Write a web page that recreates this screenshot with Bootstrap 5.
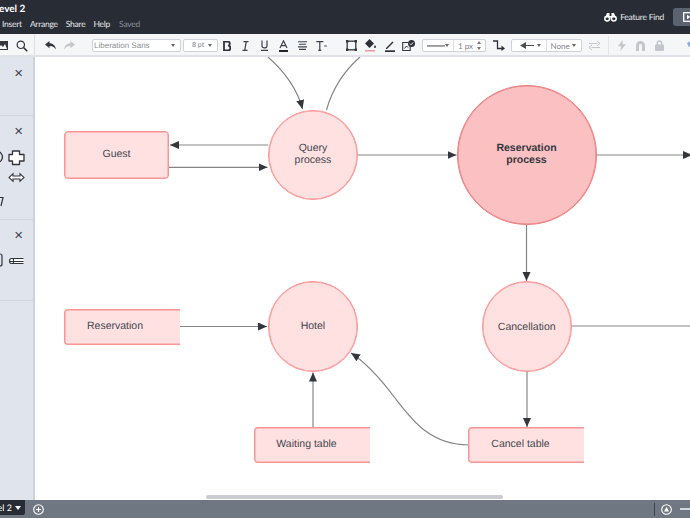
<!DOCTYPE html>
<html lang="en">
<head>
  <meta charset="UTF-8">
  <title>Level 2</title>
  <link href="https://cdn.jsdelivr.net/npm/bootstrap@5.3.0/dist/css/bootstrap.min.css" rel="stylesheet">
  <script src="https://cdn.jsdelivr.net/npm/bootstrap@5.3.0/dist/js/bootstrap.bundle.min.js"></script>
  <style>
    html, body { height: 518px; overflow: hidden; background: #fff; }
    body { font-family: "Lato", "Liberation Sans", sans-serif; color: #3a414a; text-rendering: geometricPrecision; }

    /* top bar */
    .app-top { height: 34px; background: #282c35; color: #fff; }
    .doc-name { font-size: 10px; font-weight: 700; line-height: 12px; margin-left: -6px; padding-top: 3px; }
    .menu-row { font-size: 8.5px; line-height: 12px; letter-spacing: -.25px; gap: 8px; margin-left: 2px; margin-top: 3px; color: #e6e8ec; }
    .menu-saved { color: #8b9099; margin-left: 1px; }
    .find-btn { font-size: 8.5px; letter-spacing: -.25px; color: #e6e8ec; gap: 3px; margin-right: 9px; flex: none; }
    .present-btn { width: 30px; height: 18px; flex: none; margin-right: -13px; background: #5c6370; border-radius: 3px; padding: 4px 0 0 10px; }

    /* tool bar */
    .tool-row { height: 23px; padding-top: 2px; background: #f5f6f8; border-bottom: 2px solid #e0e2e8; }
    .tb-ic { width: 19px; height: 19px; flex: none; }
    .tb-first { width: 42px; height: 21px; padding-top: 2px; margin-top: -2px; margin-left: -7px; align-self: flex-start; flex: none; border-right: 1px solid #dcdfe5; }
    .tb-undo { margin-left: 6px; }
    .tb-sel { height: 13px; background: #fff; border: 1px solid #cfd2d8; border-radius: 2px; font-size: 8px; color: #7d828a; flex: none; }
    .sel-font { width: 89px; margin-left: 13px; padding-left: 1px; font-family: "Liberation Sans", sans-serif; color: #8a8f96; }
    .sel-size { width: 35px; margin-left: 2px; margin-right: -1px; font-size: 7px; padding-left: 8px; }
    .sel-line { width: 64px; margin-left: 4px; }
    .sel-arrow { width: 71px; margin-left: 3px; }
    .sel-part { border-right: 1px solid #dcdfe5; }
    .caret-dn { width: 0; height: 0; border-left: 2.5px solid transparent; border-right: 2.5px solid transparent; border-top: 3px solid #666; margin-left: auto; margin-right: 5px; }
    .tb-gapl { margin-left: 3px; }
    .tb-gapm { margin-left: 11px; }
    .tb-rule { width: 1px; height: 19px; background: #e3e5ea; margin-left: 4px; margin-right: 3px; flex: none; }
    .tb-wrench { margin-left: 14px; }

    /* side panel */
    .work-row { height: 443px; }
    .side-panel { width: 35px; background: #e0e4ed; border-right: 2px solid #cfd2d8; overflow: hidden; flex: none; }
    .side-group { border-bottom: 1px solid #d2d6df; position: relative; }
    .grp-a { height: 59px; }
    .grp-b { height: 104px; }
    .grp-c { height: 81px; }
    .side-x { font-size: 15px; line-height: 15px; color: #3d434c; text-align: right; padding-right: 10px; font-family: "Liberation Sans", sans-serif; }
    .grp-a .side-x { padding-top: 9px; }
    .grp-b .side-x { padding-top: 8px; }
    .grp-c .side-x { padding-top: 8px; }
    .side-shapes { position: absolute; left: 0; top: 0; }

    /* canvas */
    .draw-area { position: relative; flex: 1 1 auto; background: #fff; overflow: hidden; }
    .wires { position: absolute; left: 0; top: 0; }
    .fc-node { position: absolute; display: flex; align-items: center; justify-content: center; text-align: center; font-family: "Liberation Sans", sans-serif; font-size: 10.5px; line-height: 12.5px; color: #43484f; background: #ffe1e1; border: 1px solid #fb9494; box-shadow: inset 0 0 0 .5px #fb9494; }
    .fc-round { border-radius: 50%; width: 90.5px; height: 90.5px; }
    .fc-box { border-radius: 4px; padding-bottom: 1px; }
    .fc-store { border-right: 0; border-radius: 4px 0 0 4px; height: 36px; width: 117px; padding-right: 13px; clip-path: inset(0 1px 0 0); }
    .n-guest { left: 29px; top: 74px; width: 105px; height: 48px; }
    .n-query { left: 232.700px; top: 52.500px; padding-bottom: 1px; }
    .n-res { left: 421.500px; top: 28px; width: 140px; height: 140px; padding-bottom: 2px; background: #fbc0c2; border-color: #ee7d7f; box-shadow: inset 0 0 0 .5px #ee7d7f; font-weight: 700; color: #33373d; }
    .n-hotel { left: 232.700px; top: 224px; }
    .n-cancel { left: 446.500px; top: 224px; padding-top: 1px; }
    .n-reserv { left: 29px; top: 252px; padding-right: 16px; }
    .n-wait { left: 219px; top: 370px; }
    .n-ctable { left: 433px; top: 370px; }
    .h-scroll { position: absolute; left: 171px; bottom: 1px; width: 297px; height: 4px; background: #c9ccd1; border-radius: 2px; }

    /* bottom bar */
    .app-bottom { height: 18px; background: #6f7782; }
    .page-tab { width: 25px; height: 15px; background: #282c35; color: #fff; font-size: 9px; line-height: 15px; overflow: hidden; white-space: nowrap; gap: 3px; padding-right: 4px; border-bottom-right-radius: 2px; flex: none; }
    .tab-caret { width: 0; height: 0; flex: none; border-left: 3px solid transparent; border-right: 3px solid transparent; border-top: 4px solid #fff; }
    .add-page { margin-left: 8px; }
    .zoom-rule { width: 1px; height: 13px; background: #3f454e; margin-right: 6px; }
    .zoom-dash { width: 10px; height: 2px; background: #d4d7dc; margin-left: 8px; }
  </style>
</head>
<body>

<div class="app-top d-flex justify-content-between overflow-hidden">
  <div>
    <div class="doc-name">Level 2</div>
    <div class="menu-row d-flex">
      <span>Insert</span><span>Arrange</span><span>Share</span><span>Help</span><span class="menu-saved">Saved</span>
    </div>
  </div>
  <div class="d-flex align-items-center flex-shrink-0">
    <div class="find-btn d-flex align-items-center">
      <svg width="13" height="10" viewBox="0 0 13 10"><circle cx="3.200" cy="6.600" r="2.400" fill="none" stroke="#fff" stroke-width="1.500"/><circle cx="9.800" cy="6.600" r="2.400" fill="none" stroke="#fff" stroke-width="1.500"/><path d="M1.200 5.500 3 1h2.500v3h2V1H10l1.800 4.500z" fill="#fff"/></svg>
      <span>Feature Find</span>
    </div>
    <div class="present-btn"><svg class="d-block" width="11" height="10" viewBox="0 0 11 10"><rect x=".7" y=".7" width="9.600" height="8.600" fill="none" stroke="#fff" stroke-width="1.300"/><path d="M4 2.800v4.400L7.500 5z" fill="#fff"/></svg></div>
  </div>
</div>

<div class="tool-row d-flex align-items-center overflow-hidden">
  <div class="tb-first d-flex">
    <div class="tb-ic d-flex align-items-center justify-content-center"><svg width="11" height="9" viewBox="0 0 11 9"><rect width="11" height="9" fill="#33373d"/><path d="M1 8 4 4l2 2 2-3 2 5z" fill="#f5f6f8"/></svg></div>
    <div class="tb-ic d-flex align-items-center justify-content-center"><svg width="12" height="12" viewBox="0 0 12 12"><circle cx="4.800" cy="4.800" r="3.700" fill="none" stroke="#33373d" stroke-width="1.200"/><path d="M7.600 7.600 11.300 11.300" stroke="#33373d" stroke-width="1.500"/></svg></div>
  </div>
  <div class="tb-ic tb-undo d-flex align-items-center justify-content-center"><svg width="11" height="9" viewBox="0 0 11 9"><path d="M0 3.500 4.500 0v2.200C8 2.200 10.500 4.500 11 8.500 9.500 6 7.500 5 4.500 5v2.200z" fill="#33373d"/></svg></div>
  <div class="tb-ic d-flex align-items-center justify-content-center"><svg width="11" height="9" viewBox="0 0 11 9"><path d="M11 3.500 6.500 0v2.200C3 2.200.5 4.500 0 8.500 1.500 6 3.500 5 6.500 5v2.200z" fill="#c4c7cc"/></svg></div>

  <div class="tb-sel sel-font d-flex align-items-center">Liberation Sans<span class="caret-dn"></span></div>
  <div class="tb-sel sel-size d-flex align-items-center">8 pt<span class="caret-dn"></span></div>

  <div class="tb-ic d-flex align-items-center justify-content-center"><svg width="8" height="10" viewBox="0 0 8 10"><path d="M1 .5h3.500c3 0 3 3.700.7 4.200 3 .4 2.800 4.800-.5 4.800H1z" fill="none" stroke="#2e3238" stroke-width="1.800"/></svg></div>
  <div class="tb-ic d-flex align-items-center justify-content-center"><svg width="7" height="10" viewBox="0 0 7 10"><path d="M1.500.7h5M.5 9.300h5M4.300.7 2.700 9.300" fill="none" stroke="#3d4249" stroke-width="1.200"/></svg></div>
  <div class="tb-ic d-flex align-items-center justify-content-center"><svg width="7" height="11" viewBox="0 0 7 11"><path d="M1 .5V6c0 2.500 5 2.500 5 0V.5M0 10.300h7" fill="none" stroke="#3d4249" stroke-width="1.200"/></svg></div>
  <div class="tb-ic d-flex align-items-center justify-content-center"><svg width="9" height="12" viewBox="0 0 9 12"><path d="M1 8 4.500.8 8 8M2.300 5.700h4.400" fill="none" stroke="#3d4249" stroke-width="1.200"/><rect y="10" width="9" height="2" fill="#23262b"/></svg></div>
  <div class="tb-ic d-flex align-items-center justify-content-center"><svg width="9" height="9" viewBox="0 0 9 9"><path d="M0 .7h9M1 3.300h7M0 5.900h9M1 8.400h7" stroke="#3d4249" stroke-width="1.100"/></svg></div>
  <div class="tb-ic d-flex align-items-center justify-content-center"><svg width="11" height="10" viewBox="0 0 11 10"><path d="M.3.700h7M3.800.7v8.800M2.300 9.400h3M8.200 5h2.600" fill="none" stroke="#3d4249" stroke-width="1.200"/></svg></div>

  <div class="tb-ic d-flex align-items-center justify-content-center tb-gapm"><svg width="11" height="11" viewBox="0 0 11 11"><rect x="1.200" y="1.200" width="8.600" height="8.600" fill="none" stroke="#33373d" stroke-width="1.300"/><path d="M0 0h2.400v2.400H0zM8.600 0H11v2.400H8.600zM0 8.600h2.400V11H0zM8.600 8.600H11V11H8.600z" fill="#33373d"/></svg></div>
  <div class="tb-ic d-flex align-items-center justify-content-center"><svg width="11" height="13" viewBox="0 0 11 13"><path d="M4.500 0 9 4.500 4.500 9 0 4.500zM10 6c.7 1 1 1.500 1 2a1 1 0 0 1-2 0c0-.5.300-1 1-2z" fill="#2e3238"/><rect y="11" width="10" height="1.500" fill="#f29a9a"/></svg></div>
  <div class="tb-ic d-flex align-items-center justify-content-center"><svg width="10" height="12" viewBox="0 0 10 12"><path d="M1 8 7.500 1.500l1 1L2 9H1z" fill="#2e3238"/><rect y="10.300" width="10" height="1.700" fill="#2e3238"/></svg></div>
  <div class="tb-ic d-flex align-items-center justify-content-center"><svg width="13" height="11" viewBox="0 0 13 11"><path d="M6 2.500H.7v8h7.500V6" fill="none" stroke="#33373d" stroke-width="1.100"/><path d="M2.500 8.500 4.500 6l1.500 1.500" fill="none" stroke="#33373d"/><circle cx="9.500" cy="3.500" r="3.500" fill="#2e3238"/><path d="M7.800 3.500 9.100 4.800 11.200 2.300" fill="none" stroke="#fff" stroke-width=".9"/></svg></div>

  <div class="tb-sel sel-line d-flex align-items-center">
    <div class="sel-part d-flex align-items-center h-100 w-50"><svg class="ms-1 flex-shrink-0" width="18" height="2" viewBox="0 0 18 2"><rect y=".4" width="18" height="1.100" fill="#55595f"/></svg><span class="caret-dn"></span></div>
    <div class="d-flex align-items-center h-100 w-50 ps-1">1 px<svg class="ms-auto me-1" width="4" height="9" viewBox="0 0 4 9"><path d="M2 0 4 3H0zM2 9 0 6h4z" fill="#777"/></svg></div>
  </div>
  <div class="tb-ic d-flex align-items-center justify-content-center tb-gapl"><svg width="12" height="11" viewBox="0 0 12 11"><path d="M0 1h4.500v7.500H9" fill="none" stroke="#2e3238" stroke-width="1.300"/><path d="M8.500 5.500 12 8.500 8.500 11z" fill="#2e3238"/></svg></div>
  <div class="tb-sel sel-arrow d-flex align-items-center">
    <div class="sel-part d-flex align-items-center h-100 w-50"><svg class="ms-2 flex-shrink-0" width="14" height="7" viewBox="0 0 14 7"><path d="M0 3.500 6 0v3h8v1H6v3z" fill="#4a4e55"/></svg><span class="caret-dn"></span></div>
    <div class="d-flex align-items-center h-100 w-50 ps-1">None<span class="caret-dn"></span></div>
  </div>
  <div class="tb-ic d-flex align-items-center justify-content-center tb-gapl"><svg width="11" height="9" viewBox="0 0 11 9"><path d="M0 2.500h8.500M8 0l3 2.500L8 5M11 6.500H2.500M3 4 0 6.500 3 9" fill="none" stroke="#c3c6cb" stroke-width="1"/></svg></div>
  <div class="tb-rule"></div>
  <div class="tb-ic d-flex align-items-center justify-content-center"><svg width="8" height="11" viewBox="0 0 8 11"><path d="M4.500 0 0 6.200h3.200L2.300 11 8 4.300H4.600z" fill="#c3c6cb"/></svg></div>
  <div class="tb-ic d-flex align-items-center justify-content-center"><svg width="9" height="10" viewBox="0 0 9 10"><path d="M1.500 10V4.500a3 3 0 0 1 6 0V10" fill="none" stroke="#c3c6cb" stroke-width="3"/></svg></div>
  <div class="tb-ic d-flex align-items-center justify-content-center"><svg width="9" height="11" viewBox="0 0 9 11"><path d="M2.300 5V3.200a2.200 2.200 0 0 1 4.400 0V5" fill="none" stroke="#c3c6cb" stroke-width="1.400"/><rect y="4.500" width="9" height="6.500" rx="1" fill="#c3c6cb"/></svg></div>
  <div class="tb-ic d-flex align-items-center justify-content-center tb-wrench"><svg width="11" height="11" viewBox="0 0 11 11"><path d="M0 3.500 2 1.500l2 1.500 1-1 2 2 4 4-2 2-5-3.500-2 .5z" fill="#8fb0dc"/></svg></div>
</div>

<div class="work-row d-flex">
  <div class="side-panel">
    <div class="side-group grp-a"><div class="side-x">×</div></div>
    <div class="side-group grp-b">
      <div class="side-x">×</div>
      <svg class="side-shapes" width="33" height="104" viewBox="0 0 33 104">
        <circle cx="-3" cy="41" r="5.500" fill="none" stroke="#30343a" stroke-width="1.300"/>
        <path d="M12.500 35h7v3.500H24v6.500h-4.500v3.500h-7V45H9v-6.500h3.500z" fill="#fff" stroke="#30343a" stroke-width="1.300" stroke-linejoin="round"/>
        <path d="M13 60h7v-2.300l4 3.800-4 3.800V63h-7v2.300l-4-3.800 4-3.800z" fill="#fff" stroke="#30343a" stroke-width="1.100"/>
        <path d="M-2 81.500h5L1 90" fill="none" stroke="#30343a" stroke-width="1.200"/>
      </svg>
    </div>
    <div class="side-group grp-c">
      <div class="side-x">×</div>
      <svg class="side-shapes" width="33" height="81" viewBox="0 0 33 81">
        <rect x="-6" y="34" width="8" height="12" rx="2" fill="none" stroke="#30343a" stroke-width="1.200"/>
        <path d="M23.500 38.500H11.500q-2 0-2 2.500t2 2.500h12M13.500 38.500v5M10 41.500h13.500" fill="#fff" stroke="#30343a" stroke-width="1.100"/>
      </svg>
    </div>
  </div>

  <div class="draw-area">
    <svg class="wires" width="655" height="443" viewBox="35 57 655 443">
      <defs>
        <marker id="tip" markerUnits="userSpaceOnUse" markerWidth="10" markerHeight="9" refX="9" refY="4" orient="auto"><path d="M0 0 9 4 0 8z" fill="#33373d"/></marker>
      </defs>
      <g fill="none" stroke="#858585" stroke-width="1.200">
        <path d="M268 57C285 72 297 88 302.500 109" marker-end="url(#tip)"/>
        <path d="M360 57C343 72 332 90 326.500 110"/>
        <path d="M268 145H170" marker-end="url(#tip)"/>
        <path d="M169 167.300H267.500" marker-end="url(#tip)"/>
        <path d="M358 155H456.500" marker-end="url(#tip)"/>
        <path d="M596 155H692" marker-end="url(#tip)"/>
        <path d="M526.500 224V281" marker-end="url(#tip)"/>
        <path d="M572 326H690"/>
        <path d="M180 326.500H267" marker-end="url(#tip)"/>
        <path d="M313 427V372.500" marker-end="url(#tip)"/>
        <path d="M527 371V427" marker-end="url(#tip)"/>
        <path d="M469 445C430 445 412 420 395 398 380 378 365 362 351 353" marker-end="url(#tip)"/>
      </g>
    </svg>
    <div class="fc-node fc-box n-guest">Guest</div>
    <div class="fc-node fc-round n-query">Query<br>process</div>
    <div class="fc-node n-res rounded-circle">Reservation<br>process</div>
    <div class="fc-node fc-box fc-store n-reserv">Reservation</div>
    <div class="fc-node fc-round n-hotel">Hotel</div>
    <div class="fc-node fc-round n-cancel">Cancellation</div>
    <div class="fc-node fc-box fc-store n-wait">Waiting table</div>
    <div class="fc-node fc-box fc-store n-ctable">Cancel table</div>
    <div class="h-scroll"></div>
  </div>
</div>

<div class="app-bottom d-flex align-items-start">
  <div class="page-tab d-flex align-items-center justify-content-end"><span class="flex-shrink-0">Level 2</span><span class="tab-caret"></span></div>
  <svg class="add-page mt-1" width="11" height="11" viewBox="0 0 11 11"><circle cx="5.500" cy="5.500" r="4.800" fill="none" stroke="#fff" stroke-width="1.100"/><path d="M3 5.500h5M5.500 3v5" stroke="#fff" stroke-width="1.100"/></svg>
  <div class="d-flex align-items-center ms-auto h-100">
    <div class="zoom-rule"></div>
    <svg width="11" height="11" viewBox="0 0 11 11"><circle cx="5.500" cy="5.500" r="4.800" fill="none" stroke="#fff" stroke-width="1.100"/><path d="M5.500 2.800 8 7.500H3z" fill="#fff"/></svg>
    <div class="zoom-dash"></div>
  </div>
</div>

</body>
</html>
